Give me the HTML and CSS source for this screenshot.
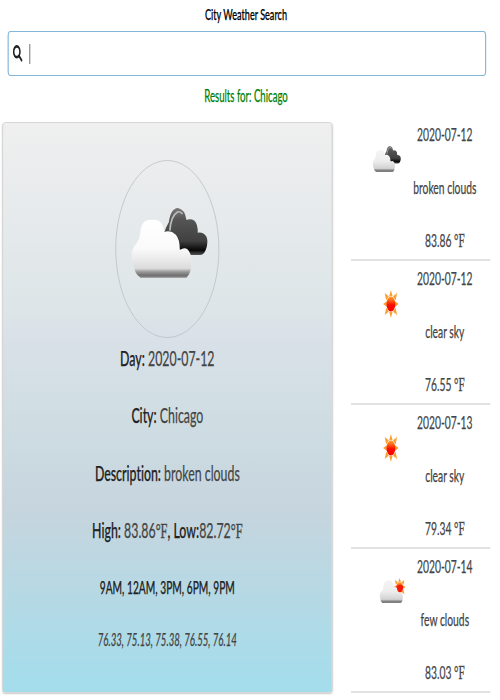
FILE: index.html
```html
<!DOCTYPE html>
<html lang="en">
<head>
<meta charset="utf-8">
<title>City Weather Search</title>
<link rel="stylesheet" href="styles.css">
</head>
<body>
<svg class="defs" width="0" height="0" aria-hidden="true">
  <defs>
    <linearGradient id="white" x1="0" y1="0" x2="0" y2="1"><stop offset="0" stop-color="#fff"/><stop offset=".5" stop-color="#fafafa"/><stop offset=".84" stop-color="#dcdcdc"/><stop offset=".9" stop-color="#999"/><stop offset=".96" stop-color="#707070"/><stop offset="1" stop-color="#8c8c8c"/></linearGradient>
    <linearGradient id="pale" x1="0" y1="0" x2="0" y2="1"><stop offset="0" stop-color="#f4f4f4"/><stop offset=".5" stop-color="#ededed"/><stop offset=".84" stop-color="#d2d2d2"/><stop offset=".9" stop-color="#999"/><stop offset=".96" stop-color="#707070"/><stop offset="1" stop-color="#8c8c8c"/></linearGradient>
    <linearGradient id="dark" x1="0" y1="0" x2="0" y2="1"><stop offset="0" stop-color="#777"/><stop offset=".25" stop-color="#555"/><stop offset=".7" stop-color="#404040"/><stop offset=".9" stop-color="#080808"/><stop offset="1" stop-color="#555"/></linearGradient>
    <linearGradient id="core" x1="0" y1="0" x2="0" y2="1"><stop offset="0" stop-color="#ffa733"/><stop offset=".3" stop-color="#ff5a10"/><stop offset=".55" stop-color="#f80d00"/><stop offset="1" stop-color="#f00"/></linearGradient>
    <path id="cloud-shape" d="M150 381Q132 370 131 347Q122 335 123 313Q125 292 139 276Q149 262 149 248Q152 208 178 207H196Q218 210 221 244Q240 237 256 252Q268 265 268 298Q288 285 298 306Q306 323 302 347Q300 370 288 381Z"/>
    <symbol id="broken" viewBox="122 172 231 210" preserveAspectRatio="none">
      <path fill="url(#dark)" d="M222 244Q226 230 235 215Q240 174 262 172Q283 175 288 208Q300 203 312 210Q322 219 322 246Q338 243 348 258Q354 274 347 294Q342 311 330 313H300L265 295Z"/>
      <path fill="none" stroke="#bbb" stroke-width="5" d="M238 240Q241 196 261 184Q270 181 276 190"/>
      <use href="#cloud-shape"/>
    </symbol>
    <symbol id="sun" viewBox="0 0 46 82" preserveAspectRatio="none">
      <path fill="#fba030" d="M23 0L28 18H18ZM23 82L28 64H18ZM0 41L11 33V49ZM46 41L35 33V49ZM5 9L17 19L9 30ZM41 9L29 19L37 30ZM5 73L17 63L9 52ZM41 73L29 63L37 52Z"/>
      <ellipse cx="23" cy="41" rx="13" ry="22" fill="url(#core)"/>
    </symbol>
  </defs>
</svg>
<div class="viewport">
<main class="page">
  <h1 class="title">City Weather Search</h1>
  <div class="search">
    <svg class="search-icon" viewBox="0 0 18 18"><circle cx="7.2" cy="7.2" r="5.7"/><path d="M11.2 11.5L16 16.3"/></svg>
    <span class="caret"></span>
  </div>
  <p class="results">Results for: Chicago</p>
  <div class="columns">
    <section class="card">
      <div class="circle"><svg class="hero"><use href="#broken"/></svg></div>
      <p class="line"><b>Day:</b> 2020-07-12</p>
      <p class="line"><b>City:</b> Chicago</p>
      <p class="line"><b>Description:</b> broken clouds</p>
      <p class="line"><b>High:</b> 83.86<span class="deg">°F</span><b>, Low:</b>82.72<span class="deg">°F</span></p>
      <p class="hours">9AM, 12AM, 3PM, 6PM, 9PM</p>
      <p class="temps">76.33, 75.13, 75.38, 76.55, 76.14</p>
    </section>
    <aside class="days">
      <article class="day">
        <div class="pic"><svg class="i-broken"><use href="#broken"/></svg></div>
        <div class="info"><p>2020-07-12</p><p>broken clouds</p><p>83.86 <span class="deg">°F</span></p></div>
      </article>
      <article class="day">
        <div class="pic"><svg class="i-sun"><use href="#sun"/></svg></div>
        <div class="info"><p>2020-07-12</p><p>clear sky</p><p>76.55 <span class="deg">°F</span></p></div>
      </article>
      <article class="day">
        <div class="pic"><svg class="i-sun"><use href="#sun"/></svg></div>
        <div class="info"><p>2020-07-13</p><p>clear sky</p><p>79.34 <span class="deg">°F</span></p></div>
      </article>
      <article class="day">
        <div class="pic"><svg class="i-few" viewBox="0 0 77 74" preserveAspectRatio="none"><use href="#sun" x="41" y="0" width="36" height="54"/><path d="M8 74Q2 68 2 60Q-2 48 5 40Q11 35 11 28Q13 7 28 7Q39 8 43 27Q52 26 55 40Q66 36 68 52Q70 67 63 74Z"/><ellipse cx="60" cy="31" rx="8" ry="11" fill="#f21a08"/></svg></div>
        <div class="info"><p>2020-07-14</p><p>few clouds</p><p>83.03 <span class="deg">°F</span></p></div>
      </article>
    </aside>
  </div>
</main>
</div>
</body>
</html>
```
FILE: styles.css
```css
* { box-sizing: border-box; }
html, body { margin: 0; background: #fff; }
body { font-family: Lato, "Liberation Sans", sans-serif; font-variant-ligatures: none; color: #444; }
.viewport { width: 500px; height: 700px; overflow: hidden; }
.defs { display: block; height: 0; }
p, h1 { margin: 0; white-space: nowrap; -webkit-text-stroke: .25px currentColor; }
/* wide layout, condensed to fit the narrow viewport */
.page { width: 844px; height: 700px; transform: scaleX(.583); transform-origin: 0 0; }
.title { height: 31px; line-height: 29px; font-size: 15.6px; font-weight: 500; text-align: center; color: #000; }
.search { display: flex; align-items: center; height: 45px; margin: 0 10px 0 13px; padding-left: 7px; border: 1px solid #85b7d9; border-left-width: 2px; border-right-width: 2px; border-radius: 5px; }
.search-icon { width: 17px; height: 17px; fill: none; stroke: #222; stroke-width: 2.8; stroke-linecap: round; }
.caret { width: 2px; height: 20px; margin-left: 11px; background: #888; }
.results { height: 46px; line-height: 40px; font-size: 16.5px; text-align: center; color: #008000; }
.columns { display: flex; align-items: flex-start; }
.card { width: 566px; height: 571px; margin-left: 4px; padding-top: 37px; border: 1px solid #ccc; border-radius: 5px; box-shadow: 0 1px 2px #ccc; background: linear-gradient(#efefef 0%, #dde5e8 33%, #dae1e8 37%, #cfdde3 52%, #c6d5de 68%, #a3ddec 100%); text-align: center; color: #444; }
.circle { display: flex; align-items: center; justify-content: center; width: 178px; height: 178px; margin: 0 auto; padding: 0 0 13px 7px; border: 1px solid #bbc1c4; border-radius: 50%; }
.hero { width: 132px; height: 70px; fill: url(#white); }
.line { height: 57.4px; line-height: 41px; font-size: 21.2px; }
.line b, .hours { font-weight: 500; color: #222; }
.deg { font-family: "Liberation Serif", serif; -webkit-text-stroke-width: .4px; }
.hours { height: 53px; line-height: 39px; font-size: 17.5px; }
.temps { line-height: 39px; font-size: 16.5px; font-style: italic; }
.days { width: 239px; margin: -5px 0 0 32px; }
.day { display: flex; height: 143.9px; border-bottom: 2px solid #e2e2e2; }
.pic { display: flex; width: 98px; padding-top: 29px; justify-content: flex-end; }
.i-broken { width: 49px; height: 26px; margin-right: 12px; fill: url(#pale); }
.i-sun { width: 27px; height: 28px; margin: 0 16px 0 0; }
.i-few { width: 45px; height: 25px; margin-right: 4px; fill: url(#pale); }
.info { width: 126px; text-align: center; font-size: 17.7px; color: #444; }
.info p { height: 53px; line-height: 35px; }
.info .deg { font-size: 19px; }
```
